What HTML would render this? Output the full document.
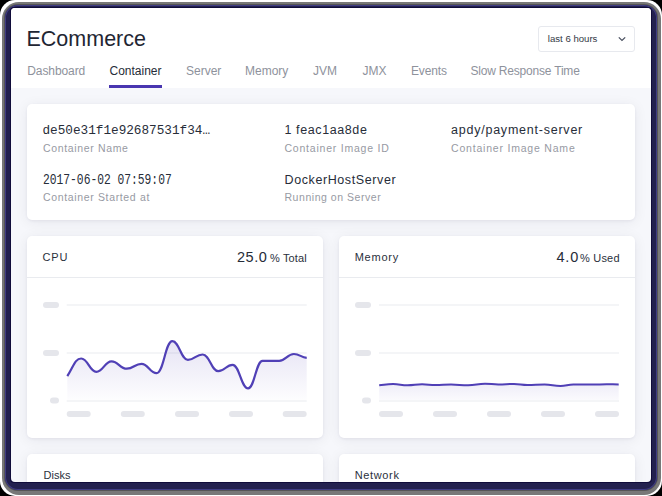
<!DOCTYPE html>
<html><head><meta charset="utf-8">
<style>
html,body{margin:0;padding:0;}
body{width:662px;height:496px;position:relative;overflow:hidden;background:#000;font-family:"Liberation Sans",sans-serif;}
.abs{position:absolute;}
#white{left:0;top:0;width:662px;height:496px;background:#fff;border-radius:15px;}
#gray{left:1.5px;top:1.5px;right:1.5px;bottom:1.5px;background:#787878;border-radius:17px;}
#navy{left:5px;top:5px;right:5px;bottom:6px;background:#23214f;border-radius:13px;box-shadow:inset 0 0 0 1px #403c84,0 0 0 1px #555;}
#inner{left:10px;top:7px;width:642px;height:476px;background:#100c3a;border-radius:4px;}
#content{left:0;top:0;width:662px;height:496px;background:#f6f7fb;clip-path:inset(8px 11px 14px 11px round 4px);}
#header{left:11px;top:8px;width:640px;height:80px;background:#fff;}
.t{position:absolute;white-space:nowrap;line-height:1;}
.card{position:absolute;background:#fff;border-radius:5px;box-shadow:0 1px 3px rgba(30,25,60,0.06),0 2px 14px rgba(30,25,60,0.07);}
.tab{position:absolute;top:65.4px;font-size:12px;color:#8e929c;line-height:1;}
.val{font-size:12.5px;color:#272d39;letter-spacing:0.6px;}
.lbl{font-size:10.5px;color:#979aa3;letter-spacing:0.65px;}
.mono{font-family:"Liberation Mono",monospace;letter-spacing:0;}
</style></head><body>
<div id="white" class="abs"></div>
<div id="gray" class="abs"></div>
<div id="navy" class="abs"></div>
<div id="inner" class="abs"></div>
<div id="content" class="abs">
  <div id="header" class="abs"></div>
  <div class="t" style="left:26.5px;top:29px;font-size:21.5px;color:#1f2633;">ECommerce</div>
  <div class="abs" style="left:538px;top:26px;width:95px;height:24px;border:1px solid #e7e9ee;border-radius:3px;background:#fff;"></div>
  <div class="t" style="left:547.8px;top:33.6px;font-size:9.6px;color:#343a46;">last 6 hours</div>
  <svg class="abs" style="left:617px;top:35px" width="10" height="8" viewBox="0 0 10 8"><path d="M1.8,2.4 L5,5.4 L8.2,2.4" fill="none" stroke="#4a5060" stroke-width="1.3"/></svg>
  <div class="tab" style="left:27.3px;letter-spacing:-0.1px;">Dashboard</div>
  <div class="tab" style="left:109.5px;color:#262c38;">Container</div>
  <div class="tab" style="left:186px;">Server</div>
  <div class="tab" style="left:245px;">Memory</div>
  <div class="tab" style="left:313px;">JVM</div>
  <div class="tab" style="left:362.5px;">JMX</div>
  <div class="tab" style="left:411px;letter-spacing:-0.15px;">Events</div>
  <div class="tab" style="left:470.5px;letter-spacing:-0.2px;">Slow Response Time</div>
  <div class="abs" style="left:109px;top:85px;width:53px;height:3px;background:#4936b0;"></div>

  <div class="card" style="left:27px;top:104px;width:608px;height:116px;"></div>
  <div class="t val mono" style="left:42.5px;top:125px;font-size:12.7px;">de50e31f1e92687531f34…</div>
  <div class="t lbl" style="left:43px;top:143px;">Container Name</div>
  <div class="t val" style="left:284.5px;top:124.3px;">1 feac1aa8de</div>
  <div class="t lbl" style="left:284.5px;top:143px;letter-spacing:0.78px;">Container Image ID</div>
  <div class="t val" style="left:451px;top:124.3px;letter-spacing:0.77px;">apdy/payment-server</div>
  <div class="t lbl" style="left:451px;top:143px;letter-spacing:0.8px;">Container Image Name</div>
  <div class="t val mono" style="left:43px;top:174px;font-size:13.8px;transform:scaleX(0.818);transform-origin:0 0;">2017-06-02 07:59:07</div>
  <div class="t lbl" style="left:43px;top:192px;">Container Started at</div>
  <div class="t val" style="left:284.5px;top:174px;">DockerHostServer</div>
  <div class="t lbl" style="left:284.5px;top:192px;letter-spacing:0.54px;">Running on Server</div>

  <div class="card" style="left:27px;top:236px;width:296px;height:202px;"></div>
  <div class="card" style="left:339px;top:236px;width:296px;height:202px;"></div>
  <div class="card" style="left:27px;top:454px;width:296px;height:202px;"></div>
  <div class="card" style="left:339px;top:454px;width:296px;height:202px;"></div>
  <div class="abs" style="left:27px;top:277px;width:296px;height:1px;background:#e9ebef;"></div>
  <div class="abs" style="left:339px;top:277px;width:296px;height:1px;background:#e9ebef;"></div>
  <div class="t" style="left:42.5px;top:252px;font-size:11px;color:#2a303c;letter-spacing:0.9px;">CPU</div>
  <div class="t" style="left:237px;top:249.5px;font-size:14.5px;color:#262c38;letter-spacing:0.5px;">25.0</div>
  <div class="t" style="left:270px;top:253px;font-size:11px;color:#2a303c;letter-spacing:0.15px;">% Total</div>
  <div class="t" style="left:354.7px;top:252px;font-size:11px;color:#2a303c;letter-spacing:0.75px;">Memory</div>
  <div class="t" style="left:556.5px;top:249.5px;font-size:14.5px;color:#262c38;letter-spacing:0.8px;">4.0</div>
  <div class="t" style="left:580px;top:253px;font-size:11px;color:#2a303c;letter-spacing:0.2px;">% Used</div>
  <div class="t" style="left:43.5px;top:470px;font-size:11px;color:#2a303c;">Disks</div>
  <div class="t" style="left:354.7px;top:470px;font-size:11px;color:#2a303c;letter-spacing:0.65px;">Network</div>

  <svg class="abs" style="left:0;top:0" width="662" height="496" viewBox="0 0 662 496">
    <defs>
      <linearGradient id="g1" x1="0" y1="0" x2="0" y2="1">
        <stop offset="0" stop-color="#4a38b0" stop-opacity="0.14"/>
        <stop offset="1" stop-color="#4a38b0" stop-opacity="0.01"/>
      </linearGradient>
      <linearGradient id="g2" x1="0" y1="0" x2="0" y2="1">
        <stop offset="0" stop-color="#4a38b0" stop-opacity="0.09"/>
        <stop offset="1" stop-color="#4a38b0" stop-opacity="0.025"/>
      </linearGradient>
    </defs>
    <g fill="#e5e6eb">
      <rect x="43" y="302" width="16" height="6" rx="3"/>
      <rect x="43" y="350" width="16" height="6" rx="3"/>
      <rect x="50" y="397.5" width="9" height="6" rx="3"/>
      <rect x="66.7" y="411" width="24" height="6" rx="3"/>
      <rect x="120.8" y="411" width="24" height="6" rx="3"/>
      <rect x="175" y="411" width="24" height="6" rx="3"/>
      <rect x="229" y="411" width="24" height="6" rx="3"/>
      <rect x="282.7" y="411" width="24" height="6" rx="3"/>
      <rect x="355" y="302" width="16" height="6" rx="3"/>
      <rect x="355" y="350" width="16" height="6" rx="3"/>
      <rect x="362" y="397.5" width="9" height="6" rx="3"/>
      <rect x="379" y="411" width="24" height="6" rx="3"/>
      <rect x="433" y="411" width="24" height="6" rx="3"/>
      <rect x="487" y="411" width="24" height="6" rx="3"/>
      <rect x="541" y="411" width="24" height="6" rx="3"/>
      <rect x="595" y="411" width="24" height="6" rx="3"/>
    </g>
    <g fill="#e9ebf0">
      <rect x="66.7" y="304.5" width="240" height="1"/>
      <rect x="66.7" y="352.5" width="240" height="1"/>
      <rect x="66.7" y="400.5" width="240" height="1"/>
      <rect x="379" y="304.5" width="240" height="1"/>
      <rect x="379" y="352.5" width="240" height="1"/>
      <rect x="379" y="400.5" width="240" height="1"/>
    </g>
    <path d="M67.30,376.20C73.56,366.64 74.94,358.50 81.20,358.50C88.00,358.50 89.50,371.80 96.30,371.80C103.14,371.80 104.66,361.40 111.50,361.40C118.39,361.40 119.91,368.70 126.80,368.70C133.41,368.70 134.88,363.80 141.50,363.80C148.29,363.80 149.81,373.20 156.60,373.20C163.66,373.20 165.24,341.20 172.30,341.20C179.32,341.20 180.88,359.90 187.90,359.90C194.51,359.90 195.99,354.50 202.60,354.50C209.66,354.50 211.24,371.20 218.30,371.20C224.74,371.20 226.16,364.80 232.60,364.80C239.57,364.80 241.12,388.30 248.10,388.30C254.58,388.30 256.02,360.80 262.50,360.80C270.01,360.80 271.69,360.80 279.20,360.80C285.81,360.80 287.28,354.00 293.90,354.00C299.66,354.00 300.94,357.37 306.70,357.90L306.7,400L67.3,400Z" fill="url(#g1)"/>
    <path d="M67.30,376.20C73.56,366.64 74.94,358.50 81.20,358.50C88.00,358.50 89.50,371.80 96.30,371.80C103.14,371.80 104.66,361.40 111.50,361.40C118.39,361.40 119.91,368.70 126.80,368.70C133.41,368.70 134.88,363.80 141.50,363.80C148.29,363.80 149.81,373.20 156.60,373.20C163.66,373.20 165.24,341.20 172.30,341.20C179.32,341.20 180.88,359.90 187.90,359.90C194.51,359.90 195.99,354.50 202.60,354.50C209.66,354.50 211.24,371.20 218.30,371.20C224.74,371.20 226.16,364.80 232.60,364.80C239.57,364.80 241.12,388.30 248.10,388.30C254.58,388.30 256.02,360.80 262.50,360.80C270.01,360.80 271.69,360.80 279.20,360.80C285.81,360.80 287.28,354.00 293.90,354.00C299.66,354.00 300.94,357.37 306.70,357.90" fill="none" stroke="#5040b6" stroke-width="2.2"/>
    <path d="M379.20,385.30C385.45,384.60 386.85,384.00 393.10,384.00C399.62,384.00 401.08,385.30 407.60,385.30C414.12,385.30 415.58,384.30 422.10,384.30C428.08,384.30 429.42,385.00 435.40,385.00C442.42,385.00 443.98,384.50 451.00,384.50C458.69,384.50 460.41,385.30 468.10,385.30C475.71,385.30 477.39,383.70 485.00,383.70C490.99,383.70 492.31,384.40 498.30,384.40C505.37,384.40 506.94,384.00 514.00,384.00C519.99,384.00 521.31,385.00 527.30,385.00C535.09,385.00 536.81,384.50 544.60,384.50C551.75,384.50 553.35,385.90 560.50,385.90C566.26,385.90 567.54,384.60 573.30,384.60C582.16,384.60 584.13,384.60 593.00,384.60C599.12,384.60 600.48,384.20 606.60,384.20C612.05,384.20 613.25,384.46 618.70,384.50L618.7,400L379.2,400Z" fill="url(#g2)"/>
    <path d="M379.20,385.30C385.45,384.60 386.85,384.00 393.10,384.00C399.62,384.00 401.08,385.30 407.60,385.30C414.12,385.30 415.58,384.30 422.10,384.30C428.08,384.30 429.42,385.00 435.40,385.00C442.42,385.00 443.98,384.50 451.00,384.50C458.69,384.50 460.41,385.30 468.10,385.30C475.71,385.30 477.39,383.70 485.00,383.70C490.99,383.70 492.31,384.40 498.30,384.40C505.37,384.40 506.94,384.00 514.00,384.00C519.99,384.00 521.31,385.00 527.30,385.00C535.09,385.00 536.81,384.50 544.60,384.50C551.75,384.50 553.35,385.90 560.50,385.90C566.26,385.90 567.54,384.60 573.30,384.60C582.16,384.60 584.13,384.60 593.00,384.60C599.12,384.60 600.48,384.20 606.60,384.20C612.05,384.20 613.25,384.46 618.70,384.50" fill="none" stroke="#5040b6" stroke-width="2"/>
  </svg>
</div>
</body></html>
